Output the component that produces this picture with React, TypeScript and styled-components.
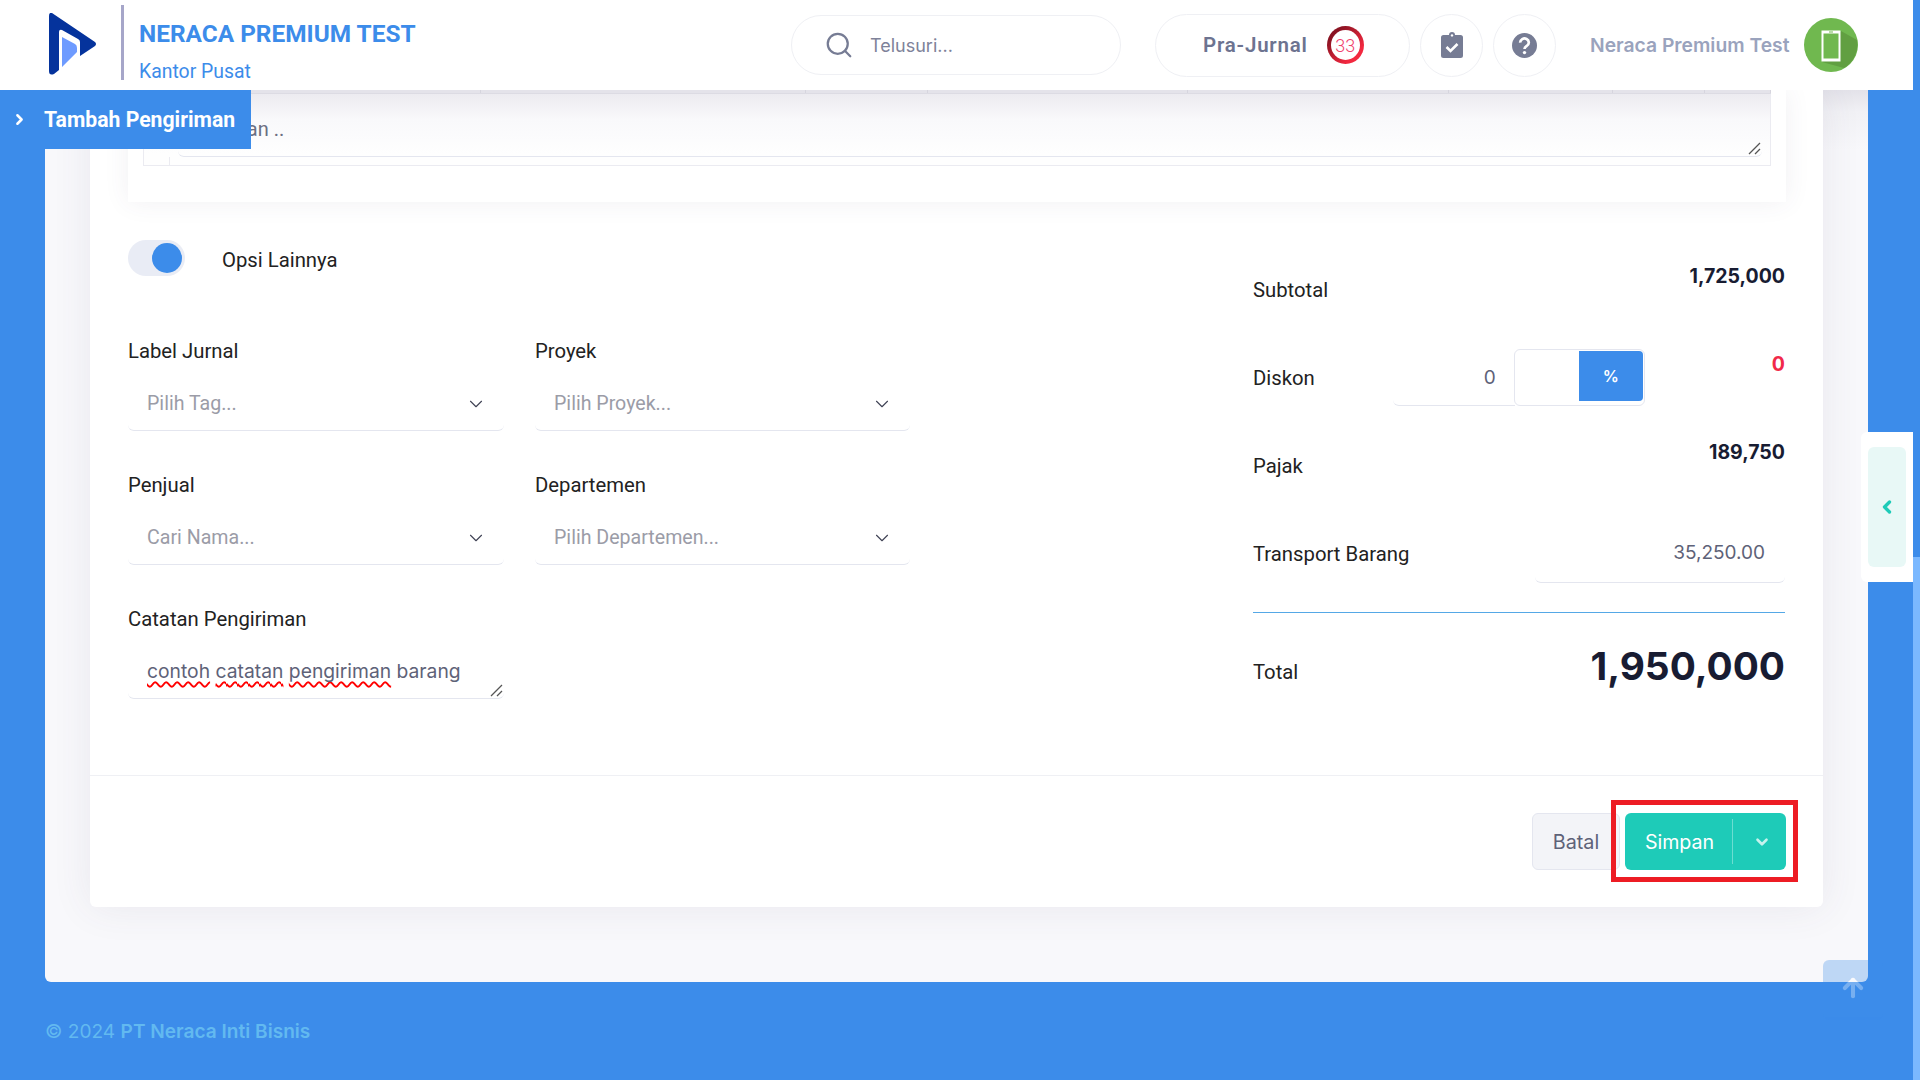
import React from 'react';
import styled, { createGlobalStyle } from 'styled-components';
import { ChevronDown, ChevronLeft, ChevronRight, Search, ArrowUp } from 'lucide-react';

const BLUE = '#3c8cea';
const TEAL = '#1ecbb8';
const BODY_FONT = '"Roboto", "Liberation Sans", sans-serif';
const UI_FONT = '"Inter", "Liberation Sans", sans-serif';

const GlobalStyle = createGlobalStyle`
  html, body {
    margin: 0;
    width: 1920px;
    height: 1080px;
    overflow: hidden;
    background: ${BLUE};
    font-family: ${BODY_FONT};
  }
  * { box-sizing: border-box; }
`;

const Shell = styled.div`
  display: flex;
  width: 1920px;
  height: 1080px;
  position: relative;
  overflow: hidden;
`;

const Main = styled.div`
  width: 1913px;
  display: flex;
  flex-direction: column;
`;

const ScrollTrack = styled.div`
  width: 7px;
  padding-top: 557px;
`;

const ScrollThumb = styled.div`
  height: 523px;
  background: #7ab8ff;
`;

const Header = styled.header`
  height: 90px;
  background: #fff;
  display: flex;
  align-items: center;
  flex: none;
  position: relative;
  z-index: 3;
`;

const Brand = styled.div`
  width: 791px;
  display: flex;
  align-items: center;
  padding-left: 49px;
`;

const LogoMark = styled.svg`
  margin-bottom: 3px;
`;

const BrandDivider = styled.div`
  width: 3px;
  height: 75px;
  background: #a6a6c9;
  margin: 0 15px 6px 24px;
`;

const BrandText = styled.div`
  display: flex;
  flex-direction: column;
  gap: 13px;
  padding-top: 13px;
  color: ${BLUE};
`;

const BrandTitle = styled.div`
  font-size: 24.4px;
  font-weight: 700;
  line-height: 28px;
  white-space: nowrap;
`;

const BrandSub = styled.div`
  font-size: 19.4px;
  line-height: 22px;
`;

const SearchPill = styled.div`
  width: 330px;
  height: 60px;
  border: 1px solid #eff0f4;
  border-radius: 30px;
  display: flex;
  align-items: center;
  gap: 16px;
  padding-left: 32px;
  color: #7e8299;
  font-family: ${UI_FONT};
  font-size: 18px;
`;

const JournalPill = styled.div`
  width: 255px;
  height: 63px;
  margin-left: 34px;
  border: 1px solid #eff0f4;
  border-radius: 32px;
  display: flex;
  align-items: center;
  gap: 19px;
  padding-left: 47px;
  color: #6d7390;
  font-size: 20.5px;
  font-weight: 600;
  letter-spacing: 0.8px;
`;

const BadgeRing = styled.div`
  width: 37px;
  height: 38px;
  border-radius: 50%;
  padding: 4px;
  background: linear-gradient(135deg, #8a1322 20%, #f2283f 75%);
`;

const BadgeCount = styled.div`
  width: 100%;
  height: 100%;
  border-radius: 50%;
  background: #fff;
  display: flex;
  align-items: center;
  justify-content: center;
  color: #f1416c;
  font-size: 18px;
  font-weight: 300;
  letter-spacing: 0;
`;

const IconCircle = styled.div`
  width: 63px;
  height: 63px;
  margin-left: 10px;
  border: 1px solid #eff0f4;
  border-radius: 50%;
  display: flex;
  align-items: center;
  justify-content: center;
`;

const UserName = styled.div`
  margin-left: 34px;
  color: #9aa3bd;
  font-family: ${UI_FONT};
  font-size: 19.3px;
  font-weight: 600;
  white-space: nowrap;
`;

const Avatar = styled.div`
  width: 54px;
  height: 54px;
  margin-left: 15px;
`;

const PageTitle = styled.div`
  position: absolute;
  left: 0;
  top: 90px;
  width: 251px;
  height: 59px;
  background: ${BLUE};
  z-index: 2;
  display: flex;
  align-items: center;
  gap: 16px;
  padding-left: 11px;
  color: #fff;
  font-size: 21.2px;
  font-weight: 700;
  white-space: nowrap;
`;

const Content = styled.div`
  padding: 0 45px;
  flex: none;
`;

const Panel = styled.div`
  height: 892px;
  padding: 0 45px;
  border-radius: 0 0 6px 6px;
  background: linear-gradient(to bottom, #e3e2e9 0, #f1f1f5 22px, #f8f8fb 60px);
`;

const Card = styled.div`
  height: 817px;
  background: #fff;
  border-radius: 0 0 6px 6px;
  box-shadow: 0 0 40px rgba(82, 63, 105, 0.09);
  display: flex;
  flex-direction: column;
`;

const InnerBox = styled.div`
  flex: none;
  height: 112px;
  margin: 0 37px 0 38px;
  padding: 0 15px 0 15px;
  background: #fff;
  box-shadow: 0 0 24px rgba(82, 63, 105, 0.08);
  position: relative;
`;

const TickRow = styled.div`
  height: 4px;
  display: flex;
  background: #e4e3ea;
  border-bottom: 1px solid #dcdbe3;
  border-left: 1px solid #dcdbe3;
`;

const Tick = styled.div<{ $w: number }>`
  width: ${({ $w }) => $w}px;
  border-right: 1px solid #d6d5de;
`;

const NoteCell = styled.div`
  height: 72px;
  display: flex;
  align-items: flex-end;
  border-left: 1px solid #ebebf1;
  border-right: 1px solid #ebebf1;
  border-bottom: 1px solid #ebebf1;
  background: linear-gradient(to bottom, #ecebf0 0, #f9f9fb 26px, #fefefe 60px);
`;

const NoteSpacer = styled.div`
  width: 26px;
  height: 8px;
  border-right: 1px solid #ebebf1;
`;

const NoteField = styled.div`
  flex: 1;
  height: 64px;
  margin: 0 8px 8px 8px;
  border-bottom: 1px solid #e4e6ef;
  border-radius: 0 0 6px 6px;
  padding: 24px 0 0 21px;
  position: relative;
  color: #6b6f82;
  font-size: 20px;
`;

const ResizeGrip = styled.svg`
  position: absolute;
  right: 1px;
  bottom: 1px;
`;

const FormArea = styled.div`
  flex: 1;
  display: flex;
  justify-content: space-between;
  padding: 38px 38px 0 38px;
`;

const LeftColumn = styled.div`
  width: 782px;
`;

const ToggleRow = styled.div`
  display: flex;
  align-items: center;
  gap: 37px;
  height: 36px;
  color: #222;
  font-size: 20.3px;
`;

const ToggleLabel = styled.div`
  padding-top: 4px;
`;

const ToggleTrack = styled.div`
  width: 57px;
  height: 36px;
  border-radius: 18px;
  background: #e9ecf5;
  display: flex;
  justify-content: flex-end;
  align-items: center;
  padding-right: 3px;
`;

const ToggleKnob = styled.div`
  width: 30px;
  height: 30px;
  border-radius: 50%;
  background: ${BLUE};
`;

const FieldGrid = styled.div`
  display: grid;
  grid-template-columns: 376px 375px;
  column-gap: 31px;
  row-gap: 40px;
  margin-top: 61px;
`;

const Field = styled.div<{ $wide?: boolean }>`
  display: flex;
  flex-direction: column;
  gap: 12px;
  grid-column: ${({ $wide }) => ($wide ? '1 / 2' : 'auto')};
`;

const FieldLabel = styled.div`
  color: #222;
  font-size: 20.3px;
  line-height: 28px;
`;

const SelectBox = styled.div`
  height: 54px;
  border-bottom: 1px solid #e4e6ef;
  border-radius: 0 0 6px 6px;
  display: flex;
  align-items: center;
  justify-content: space-between;
  padding: 0 17px 0 19px;
  color: #9b9ca7;
  font-size: 19.6px;
`;

const NoteBox = styled.div`
  height: 54px;
  border-bottom: 1px solid #e4e6ef;
  border-radius: 0 0 6px 6px;
  padding: 13px 0 0 19px;
  position: relative;
  color: #5e6278;
  font-family: ${UI_FONT};
  font-size: 19.3px;
  line-height: 26px;
  white-space: nowrap;
`;

const Misspelled = styled.span`
  text-decoration: underline wavy #f00 1.5px;
  text-decoration-skip-ink: none;
  text-underline-offset: 3px;
`;

const Summary = styled.div`
  width: 532px;
  padding-top: 6px;
`;

const SummaryRow = styled.div`
  height: 88px;
  display: flex;
  align-items: center;
  justify-content: space-between;
  color: #222;
  font-size: 20.3px;
`;

const SummaryValue = styled.div<{ $red?: boolean }>`
  padding-bottom: 28px;
  font-family: ${UI_FONT};
  font-size: 19.5px;
  font-weight: 700;
  color: ${({ $red }) => ($red ? '#f1294a' : '#181c32')};
`;

const DiscountGroup = styled.div`
  display: flex;
  margin: -1px auto 0 78px;
`;

const DiscountInput = styled.div`
  width: 122px;
  height: 57px;
  border-bottom: 1px solid #e4e6ef;
  border-radius: 0 0 0 6px;
  display: flex;
  align-items: center;
  justify-content: flex-end;
  padding-right: 19px;
  color: #5e6278;
  font-family: ${UI_FONT};
  font-size: 19px;
`;

const DiscountUnit = styled.div`
  width: 131px;
  height: 57px;
  border: 1px solid #e4e6ef;
  border-radius: 6px;
  padding: 1px 1px 4px 64px;
  margin-left: -1px;
`;

const PercentButton = styled.div`
  height: 100%;
  background: ${BLUE};
  border-radius: 0 4px 4px 0;
  display: flex;
  align-items: center;
  justify-content: center;
  color: #fff;
  font-family: ${UI_FONT};
  font-size: 16px;
  font-weight: 600;
`;

const TransportInput = styled.div`
  width: 250px;
  height: 57px;
  border-bottom: 1px solid #e4e6ef;
  border-radius: 0 0 6px 6px;
  display: flex;
  align-items: center;
  justify-content: flex-end;
  padding: 0 20px 2px 0;
  color: #5e6278;
  font-family: ${UI_FONT};
  font-size: 19px;
`;

const SummaryLine = styled.div`
  height: 1px;
  background: #55a8e6;
  margin-top: 14px;
`;

const TotalRow = styled.div`
  display: flex;
  align-items: center;
  justify-content: space-between;
  height: 118px;
  color: #222;
  font-size: 20.3px;
`;

const TotalValue = styled.div`
  padding-bottom: 14px;
  font-family: ${UI_FONT};
  font-size: 38.8px;
  font-weight: 700;
  color: #181c32;
`;

const ActionBar = styled.div`
  flex: none;
  height: 132px;
  border-top: 1px solid #eff0f4;
  padding: 37px 37px 0 0;
  display: flex;
  justify-content: flex-end;
  align-items: flex-start;
  gap: 5px;
  position: relative;
`;

const CancelButton = styled.div`
  width: 88px;
  height: 57px;
  background: #f3f4f8;
  border: 1px solid #e4e6ef;
  border-radius: 6px;
  display: flex;
  align-items: center;
  justify-content: center;
  color: #5e6278;
  font-family: ${UI_FONT};
  font-size: 19.8px;
`;

const SaveButton = styled.div`
  width: 161px;
  height: 57px;
  background: ${TEAL};
  border-radius: 6px;
  display: flex;
  align-items: center;
  color: #fff;
  font-family: ${UI_FONT};
  font-size: 19.6px;
`;

const SaveLabel = styled.div`
  width: 108px;
  height: 45px;
  padding-left: 2px;
  border-right: 1px solid rgba(255, 255, 255, 0.35);
  display: flex;
  align-items: center;
  justify-content: center;
`;

const SaveCaret = styled.div`
  flex: 1;
  display: flex;
  justify-content: center;
  padding-left: 5px;
  color: rgba(255, 255, 255, 0.75);
`;

// annotation rectangle drawn on top of the screenshot
const Highlight = styled.div`
  position: absolute;
  right: 25px;
  top: 24px;
  width: 187px;
  height: 82px;
  border: 5px solid #ed1c24;
  pointer-events: none;
`;

const Footer = styled.footer`
  flex: 1;
  padding: 37px 45px 0;
  color: #62b9f0;
  font-family: ${UI_FONT};
  font-size: 19.1px;
`;

const FooterStrong = styled.span`
  font-weight: 600;
`;

const SideTab = styled.div`
  position: absolute;
  left: 1861px;
  top: 432px;
  width: 52px;
  height: 150px;
  background: #fff;
  border-radius: 6px 0 0 6px;
  padding: 15px 7px;
  z-index: 2;
`;

const SideTabInner = styled.div`
  height: 100%;
  background: #e8f8f6;
  border-radius: 6px;
  display: flex;
  align-items: center;
  justify-content: center;
  color: ${TEAL};
`;

const ScrollTop = styled.div`
  position: absolute;
  left: 1823px;
  top: 960px;
  width: 60px;
  height: 60px;
  border-radius: 6px;
  background: ${BLUE};
  opacity: 0.3;
  display: flex;
  justify-content: center;
  padding-top: 14px;
  color: #fff;
`;

const Logo = () => (
  <LogoMark width="48" height="62" viewBox="0 0 48 62">
    <path
      d="M3 0 L46 29 Q48 31 46 33 L31 43 V29 Q31 27 29 26 L13 17 Q10 16 10 19 V57 L5 61 Q0 63 0 58 V3 Q0 -1 3 0 Z"
      fill="#05339c"
    />
    <path d="M13 24 L26 31 Q28 32 28 35 V39 L13 54 Z" fill="#6e9bff" />
  </LogoMark>
);

const ClipboardIcon = () => (
  <svg width="22" height="26" viewBox="0 0 22 26">
    <path
      d="M8 3 a3 3 0 0 1 6 0 h5.5 A2.5 2.5 0 0 1 22 5.5 v18 A2.5 2.5 0 0 1 19.5 26 h-17 A2.5 2.5 0 0 1 0 23.5 v-18 A2.5 2.5 0 0 1 2.5 3 Z"
      fill="#767c94"
    />
    <circle cx="11" cy="3.4" r="1.2" fill="#fff" />
    <path d="M5.5 15 l4 4 l7 -7" fill="none" stroke="#fff" strokeWidth="2.6" />
  </svg>
);

const HelpIcon = () => (
  <svg width="25" height="25" viewBox="0 0 25 25">
    <circle cx="12.5" cy="12.5" r="12.5" fill="#767c94" />
    <path d="M8.2 9.6 a4.3 4 0 1 1 6.6 3.3 c-1.5 1 -2.3 1.6 -2.3 3" fill="none" stroke="#fff" strokeWidth="2.7" />
    <circle cx="12.5" cy="19.6" r="1.7" fill="#fff" />
  </svg>
);

const AvatarIcon = () => (
  <svg width="54" height="54" viewBox="0 0 54 54">
    <circle cx="27" cy="27" r="27" fill="#70b84f" />
    <path d="M37 13 L53 22 A27 27 0 0 1 40 50 L18 44 Z" fill="#619f41" />
    <rect x="17.5" y="12.5" width="19" height="31" fill="#fff" />
    <rect x="19.5" y="15.5" width="15" height="25" fill="#70b84f" />
    <rect x="25" y="13.5" width="4" height="1" fill="#70b84f" />
  </svg>
);

const Grip = ({ color }: { color: string }) => (
  <ResizeGrip width="13" height="13" viewBox="0 0 13 13">
    <path d="M1 12 L12 1 M7 12 L12 7" stroke={color} strokeWidth="1.3" fill="none" />
  </ResizeGrip>
);

const Select = ({ label, placeholder }: { label: string; placeholder: string }) => (
  <Field>
    <FieldLabel>{label}</FieldLabel>
    <SelectBox>
      {placeholder}
      <ChevronDown size={22} color="#3f4254" strokeWidth={1.2} />
    </SelectBox>
  </Field>
);

const tickWidths = [337, 325, 122, 260, 261, 164, 92, 66];

export default function App() {
  return (
    <Shell>
      <GlobalStyle />
      <Main>
        <Header>
          <Brand>
            <Logo />
            <BrandDivider />
            <BrandText>
              <BrandTitle>NERACA PREMIUM TEST</BrandTitle>
              <BrandSub>Kantor Pusat</BrandSub>
            </BrandText>
          </Brand>
          <SearchPill>
            <Search size={30} color="#767c94" strokeWidth={1.8} />
            Telusuri...
          </SearchPill>
          <JournalPill>
            Pra-Jurnal
            <BadgeRing>
              <BadgeCount>33</BadgeCount>
            </BadgeRing>
          </JournalPill>
          <IconCircle>
            <ClipboardIcon />
          </IconCircle>
          <IconCircle>
            <HelpIcon />
          </IconCircle>
          <UserName>Neraca Premium Test</UserName>
          <Avatar>
            <AvatarIcon />
          </Avatar>
        </Header>
        <Content>
          <Panel>
            <Card>
              <InnerBox>
                <TickRow>
                  {tickWidths.map((w, i) => (
                    <Tick key={i} $w={w} />
                  ))}
                </TickRow>
                <NoteCell>
                  <NoteSpacer />
                  <NoteField>
                    Catatan ..
                    <Grip color="#555" />
                  </NoteField>
                </NoteCell>
              </InnerBox>
              <FormArea>
                <LeftColumn>
                  <ToggleRow>
                    <ToggleTrack>
                      <ToggleKnob />
                    </ToggleTrack>
                    <ToggleLabel>Opsi Lainnya</ToggleLabel>
                  </ToggleRow>
                  <FieldGrid>
                    <Select label="Label Jurnal" placeholder="Pilih Tag..." />
                    <Select label="Proyek" placeholder="Pilih Proyek..." />
                    <Select label="Penjual" placeholder="Cari Nama..." />
                    <Select label="Departemen" placeholder="Pilih Departemen..." />
                    <Field $wide>
                      <FieldLabel>Catatan Pengiriman</FieldLabel>
                      <NoteBox>
                        <Misspelled>contoh</Misspelled> <Misspelled>catatan</Misspelled>{' '}
                        <Misspelled>pengiriman</Misspelled> barang
                        <Grip color="#555" />
                      </NoteBox>
                    </Field>
                  </FieldGrid>
                </LeftColumn>
                <Summary>
                  <SummaryRow>
                    Subtotal
                    <SummaryValue>1,725,000</SummaryValue>
                  </SummaryRow>
                  <SummaryRow>
                    Diskon
                    <DiscountGroup>
                      <DiscountInput>0</DiscountInput>
                      <DiscountUnit>
                        <PercentButton>%</PercentButton>
                      </DiscountUnit>
                    </DiscountGroup>
                    <SummaryValue $red>0</SummaryValue>
                  </SummaryRow>
                  <SummaryRow>
                    Pajak
                    <SummaryValue>189,750</SummaryValue>
                  </SummaryRow>
                  <SummaryRow>
                    Transport Barang
                    <TransportInput>35,250.00</TransportInput>
                  </SummaryRow>
                  <SummaryLine />
                  <TotalRow>
                    Total
                    <TotalValue>1,950,000</TotalValue>
                  </TotalRow>
                </Summary>
              </FormArea>
              <ActionBar>
                <CancelButton>Batal</CancelButton>
                <SaveButton>
                  <SaveLabel>Simpan</SaveLabel>
                  <SaveCaret>
                    <ChevronDown size={18} strokeWidth={3.5} />
                  </SaveCaret>
                </SaveButton>
                <Highlight />
              </ActionBar>
            </Card>
          </Panel>
        </Content>
        <Footer>
          © 2024 <FooterStrong>PT Neraca Inti Bisnis</FooterStrong>
        </Footer>
      </Main>
      <ScrollTrack>
        <ScrollThumb />
      </ScrollTrack>
      <PageTitle>
        <ChevronRight size={17} strokeWidth={3.5} />
        Tambah Pengiriman
      </PageTitle>
      <SideTab>
        <SideTabInner>
          <ChevronLeft size={20} strokeWidth={4} />
        </SideTabInner>
      </SideTab>
      <ScrollTop>
        <ArrowUp size={28} strokeWidth={3.5} />
      </ScrollTop>
    </Shell>
  );
}
